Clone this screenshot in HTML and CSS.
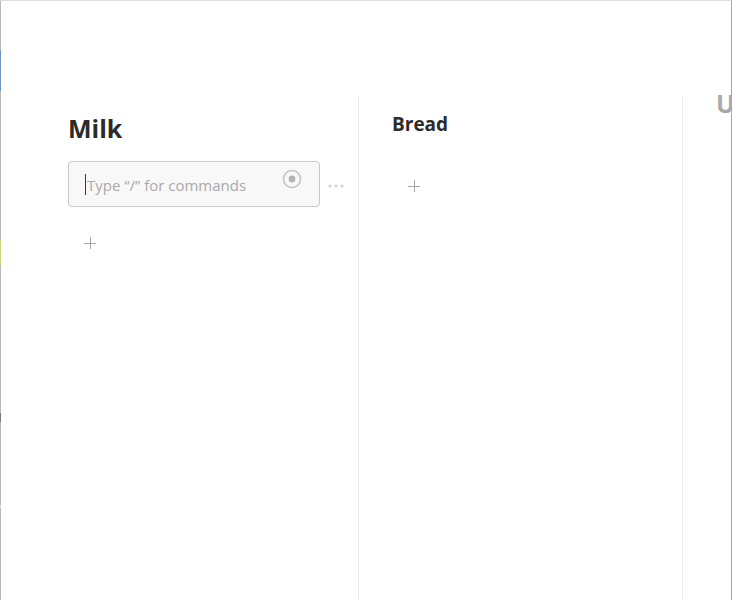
FILE: index.html
```html
<!DOCTYPE html>
<html lang="en">
<head>
<meta charset="utf-8">
<title>Board</title>
<link rel="stylesheet" href="styles.css">
</head>
<body>
<div class="window">
  <div class="edge"></div>
  <div class="board">
    <section class="column col-milk">
      <h2 class="title title-lg">Milk</h2>
      <div class="card-row">
        <div class="card-input">
          <span class="caret"></span>
          <span class="placeholder">Type “/” for commands</span>
          <svg class="target" width="20" height="20" viewBox="0 0 20 20" aria-hidden="true">
            <circle cx="10" cy="10" r="8.5" fill="none" stroke="#c4c4c4" stroke-width="1.6"/>
            <circle cx="10" cy="10" r="3.4" fill="#b3b3b3"/>
          </svg>
        </div>
        <svg class="more" width="18" height="6" viewBox="0 0 18 6" aria-hidden="true">
          <circle cx="3" cy="3" r="1.5" fill="#cfcfcf"/>
          <circle cx="9" cy="3" r="1.5" fill="#cfcfcf"/>
          <circle cx="15" cy="3" r="1.5" fill="#cfcfcf"/>
        </svg>
      </div>
      <div class="add add-milk"><span class="plus"></span></div>
    </section>
    <section class="column col-bread">
      <h2 class="title title-md">Bread</h2>
      <div class="add add-bread"><span class="plus"></span></div>
    </section>
    <section class="column col-third">
      <h2 class="title title-ghost">U</h2>
    </section>
  </div>
</div>
</body>
</html>
```
FILE: styles.css
```css
html, body {
  margin: 0;
  padding: 0;
  background: #ffffff;
}

body {
  font-family: "Open Sans", "Noto Sans", "Liberation Sans", sans-serif;
  color: #2b2b2b;
}

.window {
  display: flex;
  width: 732px;
  height: 600px;
  box-sizing: border-box;
  border-top: 1px solid #dcdcdc;
  border-right: 1px solid #a8a8a8;
  overflow: hidden;
  background: #ffffff;
}

.edge {
  flex: 0 0 1px;
  background: linear-gradient(
    to bottom,
    #b9b9b9 0, #b9b9b9 49px,
    #6f94c4 49px, #6f94c4 90px,
    #b9b9b9 90px, #b9b9b9 239px,
    #c9d77a 239px, #c9d77a 264px,
    #b9b9b9 264px, #b9b9b9 412px,
    #7a7a7a 412px, #7a7a7a 421px,
    #b9b9b9 421px, #b9b9b9 504px,
    #dedede 504px, #dedede 507px,
    #b9b9b9 507px
  );
}

.board {
  display: flex;
  flex: 1;
  padding-top: 95px;
  padding-left: 34px;
  min-width: 0;
}

.column {
  flex: 0 0 324px;
  width: 324px;
  padding-left: 33px;
  box-sizing: border-box;
  border-right: 1px solid #ececec;
}

.col-milk {
  padding-top: 16px;
}

.col-bread {
  padding-top: 15px;
}

.col-third {
  border-right: none;
  flex: 0 0 200px;
}

.title {
  margin: 0;
  font-weight: 700;
  color: #2b2b2b;
}

.title-lg {
  font-size: 25px;
  line-height: 32px;
}

.title-md {
  font-size: 19px;
  line-height: 26px;
}

.title-ghost {
  font-size: 25px;
  line-height: 30px;
  color: #a9a9a9;
  margin-top: -8px;
}

.card-row {
  display: flex;
  align-items: center;
  margin-top: 17px;
}

.card-input {
  display: flex;
  align-items: center;
  width: 252px;
  height: 46px;
  box-sizing: border-box;
  border: 1px solid #c8c8c8;
  border-radius: 4px;
  background: #f8f8f8;
  padding-left: 16px;
  padding-right: 17px;
}

.caret {
  width: 1px;
  height: 21px;
  background: #3a3a3a;
  margin-top: 1px;
  flex: 0 0 1px;
}

.placeholder {
  font-size: 15px;
  line-height: 20px;
  color: #a8a8a8;
  margin-left: 1px;
  margin-top: 2px;
  flex: 1;
  white-space: nowrap;
}

.target {
  display: block;
  margin-top: -10px;
}

.more {
  display: block;
  margin-left: 7px;
  margin-top: 3px;
}

.add {
  width: 12px;
  height: 12px;
}

.add-milk {
  margin-top: 30px;
  margin-left: 16px;
}

.add-bread {
  margin-top: 43px;
  margin-left: 16px;
}

.plus {
  display: block;
  width: 12px;
  height: 12px;
  background:
    linear-gradient(#a8a8a8, #a8a8a8) center / 12px 1px no-repeat,
    linear-gradient(#a8a8a8, #a8a8a8) center / 1px 12px no-repeat;
}
```
